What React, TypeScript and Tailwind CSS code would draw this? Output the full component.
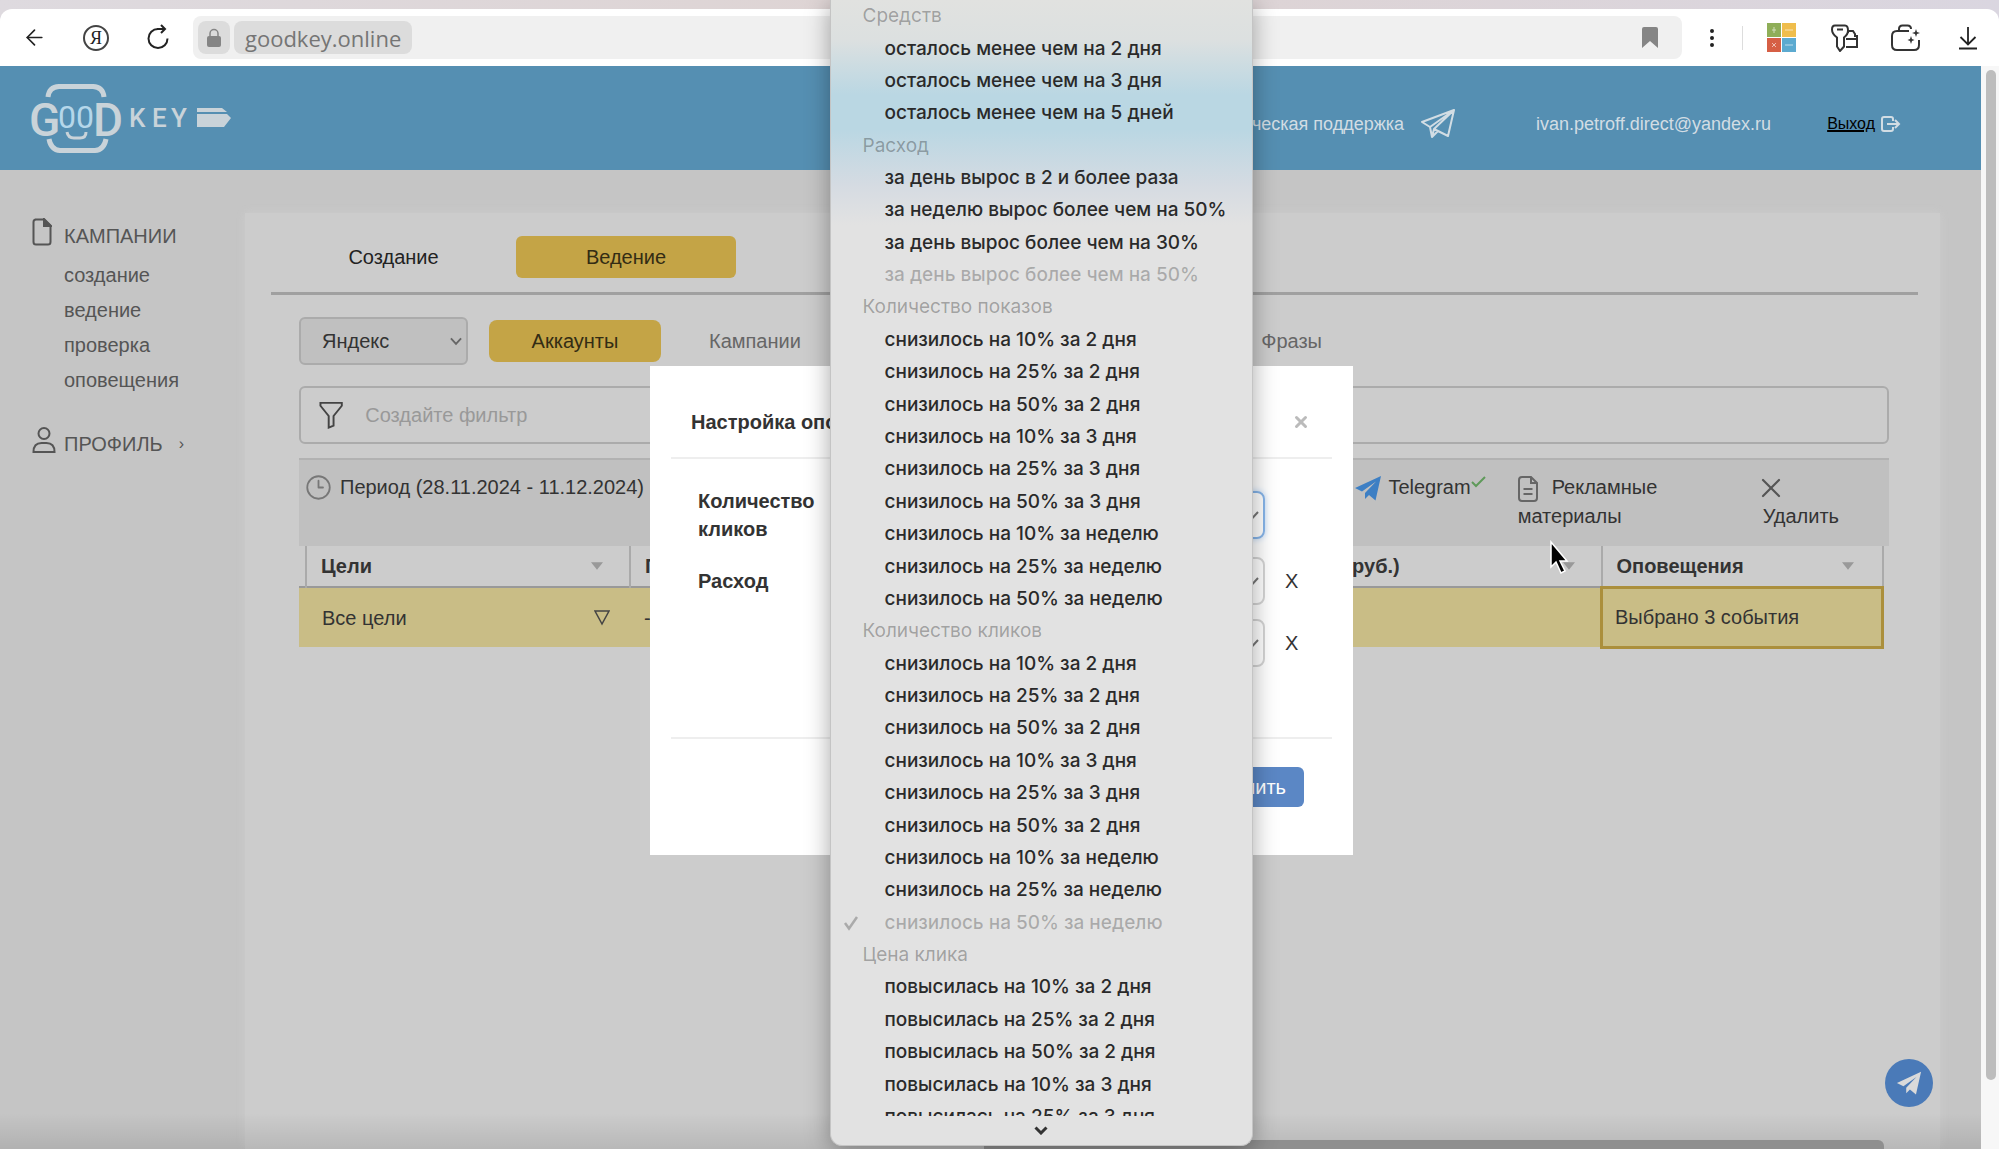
import { Fragment } from "react";
import { ArrowLeft, Clock3, EllipsisVertical, X } from "lucide-react";

const groups = [
  {
    title: "Средств",
    items: ["осталось менее чем на 2 дня", "осталось менее чем на 3 дня", "осталось менее чем на 5 дней"],
  },
  {
    title: "Расход",
    items: [
      "за день вырос в 2 и более раза",
      "за неделю вырос более чем на 50%",
      "за день вырос более чем на 30%",
      "за день вырос более чем на 50%",
    ],
    disabled: 3,
  },
  {
    title: "Количество показов",
    items: [
      "снизилось на 10% за 2 дня",
      "снизилось на 25% за 2 дня",
      "снизилось на 50% за 2 дня",
      "снизилось на 10% за 3 дня",
      "снизилось на 25% за 3 дня",
      "снизилось на 50% за 3 дня",
      "снизилось на 10% за неделю",
      "снизилось на 25% за неделю",
      "снизилось на 50% за неделю",
    ],
  },
  {
    title: "Количество кликов",
    items: [
      "снизилось на 10% за 2 дня",
      "снизилось на 25% за 2 дня",
      "снизилось на 50% за 2 дня",
      "снизилось на 10% за 3 дня",
      "снизилось на 25% за 3 дня",
      "снизилось на 50% за 2 дня",
      "снизилось на 10% за неделю",
      "снизилось на 25% за неделю",
      "снизилось на 50% за неделю",
    ],
    disabled: 8,
    checked: 8,
  },
  {
    title: "Цена клика",
    items: [
      "повысилась на 10% за 2 дня",
      "повысилась на 25% за 2 дня",
      "повысилась на 50% за 2 дня",
      "повысилась на 10% за 3 дня",
      "повысилась на 25% за 3 дня",
    ],
  },
];

const sideLinks = ["создание", "ведение", "проверка", "оповещения"];

function BrowserBar() {
  return (
    <div className="bg-linear-to-r from-[#dedadf] via-[#ded3d2] to-[#dad6e0] pt-[9px]">
      <div className="flex h-[57px] items-center rounded-t-xl bg-white px-[22px] text-[#222]">
        <button aria-label="Назад">
          <ArrowLeft size={25} strokeWidth={1.6} />
        </button>
        <button
          aria-label="Яндекс"
          className="ml-9 flex size-[26px] items-center justify-center rounded-full border-2 border-[#444] font-['Liberation_Serif',serif] text-lg leading-none"
        >
          Я
        </button>
        <button aria-label="Обновить" className="ml-9">
          <svg width="26" height="28" viewBox="0 0 26 28" fill="none" stroke="#222" strokeWidth="2">
            <path d="M13 5a9.500 9.500 0 1 0 9.500 9.500" />
            <path d="M12 5h7M16 1l4 4-4 4" />
          </svg>
        </button>
        <div className="ml-[22px] flex h-[43px] flex-1 items-center rounded-lg bg-[#f0f0f0] pl-[5px] pr-6">
          <span className="flex h-[33px] w-8 items-center justify-center rounded-lg bg-[#dcdcdc]">
            <svg width="16" height="20" viewBox="0 0 16 20">
              <path d="M4 9V5.500a4 4 0 0 1 8 0V9" fill="none" stroke="#858585" strokeWidth="1.500" />
              <rect x="1" y="8" width="14" height="11" rx="2" fill="#858585" />
            </svg>
          </span>
          <span className="ml-1 flex h-[33px] items-center rounded-lg bg-[#dcdcdc] px-[11px] font-['Open_Sans',sans-serif] text-[22px] leading-none text-[#757575]">
            goodkey.online
          </span>
          <svg className="ml-auto" width="16" height="21" viewBox="0 0 16 21">
            <path d="M2 0h12q2 0 2 2v19l-8-7-8 7V2q0-2 2-2z" fill="#858585" />
          </svg>
        </div>
        <button aria-label="Меню" className="ml-[18px]">
          <EllipsisVertical size={24} strokeWidth={2} />
        </button>
        <span className="ml-[18px] h-6 w-px bg-[#ddd]" />
        <svg className="ml-6" width="30" height="30" viewBox="0 0 30 30">
          <rect width="14" height="14" fill="#8fae58" />
          <rect x="15" width="14" height="14" fill="#efbd4c" />
          <rect y="15" width="14" height="14" fill="#d65f45" />
          <rect x="15" y="15" width="14" height="14" fill="#5caad0" />
          <path d="M7 4v6M5 7h4M18 7h8M5 20l4 4M9 20l-4 4M18 22h8" stroke="#fff" opacity=".6" />
        </svg>
        <button aria-label="Пароли" className="ml-[34px]">
          <svg width="28" height="28" viewBox="0 0 28 28" fill="none" stroke="#333" strokeWidth="2">
            <path d="M4 1.500h10q3 0 3 5 0 4-4 7v9l-4 4.500-3-4.500v-9Q1 10 1 5.500 1 1.500 4 1.500z" />
            <path d="M6 5.500h6M17 9V7h5l2 3v2h2v11H15M15 15h11" />
          </svg>
        </button>
        <button aria-label="Покупки" className="ml-8">
          <svg width="30" height="28" viewBox="0 0 30 28" fill="none" stroke="#333" strokeWidth="2">
            <path d="M18 7H6q-5 0-5 5v9q0 5 5 5h17q5 0 5-5v-5" />
            <path d="M8 7V5q0-3.500 3.500-3.500h5Q20 1.500 20 5" />
            <path d="M25 5l1 3 3 1-3 1-1 3-1-3-3-1 3-1zM20 12l1 3 2.500 1-2.500 1-1 3-1-3-2.500-1 2.500-1z" fill="#333" stroke="none" />
          </svg>
        </button>
        <button aria-label="Загрузки" className="ml-[38px]">
          <svg width="18" height="24" viewBox="0 0 18 24" fill="none" stroke="#222" strokeWidth="1.800">
            <path d="M9 1v17M1.500 11L9 18.500 16.500 11M0 22.500h18" />
          </svg>
        </button>
      </div>
    </div>
  );
}

function Logo() {
  return (
    <svg width="202" height="74" viewBox="30 82 202 74" fill="none" stroke="#c9d3d9">
      <path d="M48 98q1-10 11-10.500h34q10 .5 11 10.500M49 140q2 11 11 11.500h35q9-.5 11-11.500" strokeWidth="5" />
      <path d="M67 133q1 6 7 6h6q6 0 6-6" strokeWidth="3" />
      <g fill="#c9d3d9" stroke="none" className="font-['Roboto',sans-serif]">
        <text x="29" y="137" fontSize="46" fontWeight="500">G</text>
        <text x="58" y="129" fontSize="32" fill="#b5d7ea">0</text>
        <text x="76" y="129" fontSize="32" fill="#b5d7ea">0</text>
        <text x="93" y="137" fontSize="46" fontWeight="500">D</text>
        <text x="129 152 171" y="128" fontSize="26" fontWeight="500">KEY</text>
        <path d="M197 109h25l5 4h-30zM197 115h30l4 4-7 9h-27z" />
      </g>
    </svg>
  );
}

function Plane({ size, className }: { size: number; className?: string }) {
  return (
    <svg className={className} width={size} height={size} viewBox="0 0 28 28" fill="currentColor">
      <path d="M27 2L1 14l7 3.500L22 7.500 11 19v6l4-4 6.500 5.500z" />
    </svg>
  );
}

function Header() {
  return (
    <header className="flex h-[104px] items-center bg-[#558fb2] pl-[30px] pr-20 text-lg text-[#d2dde4]">
      <a href="#" aria-label="GoodKey">
        <Logo />
      </a>
      <a href="#" className="mt-3 ml-auto flex items-center gap-4">
        Техническая поддержка
        <svg width="36" height="30" viewBox="0 0 36 30" fill="none" stroke="#d2dde4" strokeWidth="2" strokeLinejoin="round">
          <path d="M34 1L2 13l8 5 2 10 6-6 10 5zM34 1L10 18M34 1L14 20l-2 8M14 20l4 2" />
        </svg>
      </a>
      <span className="mt-3 ml-20">ivan.petroff.direct@yandex.ru</span>
      <a href="#" className="mt-3 ml-14 flex items-center gap-1.5 text-base text-black">
        <span className="underline decoration-2">Выход</span>
        <svg width="20" height="16" viewBox="0 0 20 16" fill="none" stroke="#d2dde4" strokeWidth="2">
          <path d="M12 5V3q0-2-2-2H3Q1 1 1 3v10q0 2 2 2h7q2 0 2-2v-2M6 8h11M14 4l4 4-4 4" />
        </svg>
      </a>
    </header>
  );
}

function Sidebar() {
  return (
    <aside className="w-[245px] shrink-0 pt-[50px] pl-8 text-xl text-[#555]">
      <div className="flex h-8 items-center">
        <svg className="-mt-2 mr-3" width="20" height="28" viewBox="0 0 20 28" fill="none" stroke="#555" strokeWidth="2">
          <path d="M3 1.500h9L18.500 8v16q0 2.500-2.500 2.500H4q-2.500 0-2.500-2.500V4q0-2.500 2.500-2.500z" />
          <path d="M12 1v7h7z" fill="#555" />
        </svg>
        КАМПАНИИ
      </div>
      <nav className="mt-1.5 flex flex-col pl-8 leading-[35px]">
        {sideLinks.map((link) => (
          <a key={link} href="#">
            {link}
          </a>
        ))}
      </nav>
      <div className="mt-[30px] flex h-8 items-center">
        <svg className="-mt-2 mr-2" width="24" height="28" viewBox="0 0 24 28" fill="none" stroke="#555" strokeWidth="2">
          <circle cx="12" cy="7.500" r="5.500" />
          <path d="M1.500 26q0-9 8-9h5q8 0 8 9z" />
        </svg>
        ПРОФИЛЬ
        <span className="ml-4 text-base">›</span>
      </div>
    </aside>
  );
}

function Sort() {
  return (
    <svg width="12" height="8" viewBox="0 0 14 9" fill="#999">
      <path d="M0 0h14L7 9z" />
    </svg>
  );
}

function Workspace() {
  return (
    <main className="mt-[43px] mr-[41px] flex-1 bg-[#ccc] pt-[23px] pr-[22px] pl-[26px] text-xl text-[#333] shadow-[0_0_8px_#ccc]">
      <div className="flex border-b-[3px] border-[#a0a0a0] pb-3.5">
        <button className="h-[42px] w-[245px] text-[#222]">Создание</button>
        <button className="h-[42px] w-[220px] rounded-md bg-[#c4a446] text-[#332c14]">Ведение</button>
      </div>
      <div className="pt-[22px] pr-[29px] pl-7">
        <div className="flex items-center">
          <div className="relative">
            <select
              aria-label="Система"
              className="h-12 w-[169px] appearance-none rounded-md border-2 border-[#ababab] bg-[#c0c0c0] pl-[21px]"
            >
              <option>Яндекс</option>
            </select>
            <svg className="pointer-events-none absolute top-5 right-1.5" width="12" height="9" viewBox="0 0 13 9" fill="none" stroke="#666" strokeWidth="2">
              <path d="M1 1l5.500 6L12 1" />
            </svg>
          </div>
          <button className="ml-[21px] h-[42px] w-[172px] rounded-lg bg-[#c4a446] text-[#332c14]">Аккаунты</button>
          <button className="ml-12 text-[#666]">Кампании</button>
          <button className="ml-auto pr-[567px] text-[#666]">Фразы</button>
        </div>
        <label className="mt-[21px] flex h-[58px] items-center rounded-md border-2 border-[#ababab] pl-[18px]">
          <svg width="25" height="28" viewBox="0 0 25 28" fill="none" stroke="#444" strokeWidth="2">
            <path d="M1.500 1.500h22v3L15 15v10l-5 2V15L1.500 4.500z" />
          </svg>
          <input className="ml-[22px] w-full outline-none placeholder:text-[#999]" placeholder="Создайте фильтр" aria-label="Фильтр" />
        </label>
        <div className="mt-3.5 flex h-[88px] items-start border-t-2 border-[#b2b2b2] bg-[#c0c0c0] pt-[13px] pr-[50px] pl-1.5 leading-[29px]">
          <button className="flex items-center gap-2">
            <Clock3 size={27} strokeWidth={1.6} className="text-[#777]" />
            Период (28.11.2024 - 11.12.2024)
          </button>
          <button className="ml-auto flex items-center">
            <Plane size={28} className="mr-1.5 text-[#3d7fc4]" />
            Telegram
            <svg className="-mt-3" width="15" height="12" viewBox="0 0 15 12" fill="none" stroke="#5f9a5a" strokeWidth="2">
              <path d="M1 6l4 4 9-9" />
            </svg>
          </button>
          <button className="ml-8 w-[150px] text-left">
            <svg className="mr-3.5 inline" width="20" height="26" viewBox="0 0 20 26" fill="none" stroke="#666" strokeWidth="2">
              <path d="M4 1h9l6 6v15q0 3-3 3H4q-3 0-3-3V4q0-3 3-3zM13 1v6h6M5.500 13h9M5.500 18h9" />
            </svg>
            Рекламные материалы
          </button>
          <button className="ml-[95px] text-left">
            <X size={32} strokeWidth={1.6} className="-mt-px -mb-0.5 -ml-2 text-[#555]" />
            Удалить
          </button>
        </div>
        <div className="pr-[5px]">
          <table className="w-full table-fixed text-left">
            <thead>
              <tr className="h-[41px] border-b-2 border-[#999] text-[#333]">
                <th className="w-[7px]" />
                <th className="w-[324px] border-l-2 border-[#aaa] pr-[26px] pl-3.5">
                  <div className="flex items-center justify-between">
                    Цели <Sort />
                  </div>
                </th>
                <th className="border-l-2 border-[#aaa] pl-3.5">Показы</th>
                <th className="w-[352px] pr-[26px] pl-5">
                  <div className="flex items-center justify-between">
                    Расход (руб.) <Sort />
                  </div>
                </th>
                <th className="w-[281px] border-x-2 border-[#aaa] pr-7 pl-3.5">
                  <div className="flex items-center justify-between">
                    Оповещения <Sort />
                  </div>
                </th>
              </tr>
            </thead>
            <tbody>
              <tr className="h-[60px] bg-[#c9bd86]">
                <td />
                <td className="pr-5 pl-4">
                  <div className="flex items-center justify-between">
                    Все цели
                    <svg width="16" height="16" viewBox="0 0 16 16" fill="none" stroke="#444" strokeWidth="1.500">
                      <path d="M1 1h14L8 14z" />
                    </svg>
                  </div>
                </td>
                <td className="pl-3.5">-</td>
                <td />
                <td className="border-3 border-[#ab8f3c] pl-3">Выбрано 3 события</td>
              </tr>
            </tbody>
          </table>
        </div>
      </div>
    </main>
  );
}

function EventSelect({ label, focused }: { label: string; focused?: boolean }) {
  return (
    <div className="relative flex-1">
      <select
        aria-label={label}
        className={
          focused
            ? "h-12 w-full appearance-none rounded-lg border-2 border-[#86b5ea] shadow-[0_0_6px_#b9d6f7]"
            : "h-12 w-full appearance-none rounded-lg border-2 border-[#d5d5d5]"
        }
      />
      <svg className="pointer-events-none absolute top-5 right-1.5" width="13" height="9" viewBox="0 0 13 9" fill="none" stroke="#777" strokeWidth="2">
        <path d="M1 1l5.500 6L12 1" />
      </svg>
    </div>
  );
}

function Modal() {
  return (
    <div className="absolute inset-0 flex items-start justify-center pt-[366px] pl-1">
      <div role="dialog" className="w-[703px] bg-white px-[21px] pb-12 text-xl text-[#333]">
        <div className="flex h-[93px] items-center justify-between border-b-2 border-[#eee] pt-5 pr-[22px] pl-5">
          <h2 className="font-bold">Настройка оповещений</h2>
          <button aria-label="Закрыть" className="text-[#bbb]">
            <X size={18} strokeWidth={4} />
          </button>
        </div>
        <div className="flex h-[280px] flex-col gap-[14px] border-b-2 border-[#eee] pt-8 pr-[35px] pl-[27px]">
          <div className="flex pr-8">
            <div className="-mt-1 w-[150px] leading-7 font-bold">Количество кликов</div>
            <EventSelect label="Количество кликов" focused />
          </div>
          <div className="flex items-center">
            <div className="w-[150px] font-bold">Расход</div>
            <EventSelect label="Расход" />
            <button className="ml-5 w-3">X</button>
          </div>
          <div className="flex items-center pl-[150px]">
            <EventSelect label="Расход 2" />
            <button className="ml-5 w-3">X</button>
          </div>
        </div>
        <div className="flex justify-end pt-7 pr-7">
          <button className="h-10 rounded-md bg-[#5b87c5] px-[18px] text-white">Сохранить</button>
        </div>
      </div>
    </div>
  );
}

function OptionsMenu() {
  return (
    <div className="absolute inset-0 flex items-start justify-center pl-[83px]">
      <div className="w-[423px] overflow-hidden rounded-b-xl border-x border-b border-[#c4c4c4] bg-[#e2e2e2] bg-[linear-gradient(#e1e2e0_0px,#dce0e0_40px,#bad7e3_95px,#bad7e3_130px,#d5dbe2_185px,#e2e2e2_225px)] font-['Inter',sans-serif] text-[19px] leading-8 font-medium shadow-[0_4px_24px_rgba(0,0,0,0.35)]">
        <div className="h-[1116px] overflow-hidden">
          <ul role="listbox" aria-label="Событие" className="flex h-[1133px] flex-col">
            {groups.map((group) => (
              <Fragment key={group.title}>
                <li role="presentation" className="h-8 flex-1 pl-8 font-normal text-black/30">
                  {group.title}
                </li>
                {group.items.map((item, i) => (
                  <li
                    key={i}
                    role="option"
                    aria-selected={i === group.checked}
                    aria-disabled={i === group.disabled}
                    className={
                      i === group.disabled
                        ? "flex h-8 flex-1 items-center pl-3 text-black/25"
                        : "flex h-8 flex-1 items-center pl-3 text-[#2a2a2a]"
                    }
                  >
                    <span className="w-[42px]">
                      {i === group.checked && (
                        <svg width="16" height="16" viewBox="0 0 16 16" fill="none" stroke="#aaa" strokeWidth="2.500">
                          <path d="M2 8l4 5.500L14 2" />
                        </svg>
                      )}
                    </span>
                    {item}
                  </li>
                ))}
              </Fragment>
            ))}
          </ul>
        </div>
        <button aria-label="Ниже" className="flex h-[29px] w-full items-center justify-center">
          <svg width="14" height="9" viewBox="0 0 14 9" fill="none" stroke="#333" strokeWidth="3">
            <path d="M1.500 1.500L7 7l5.500-5.500" />
          </svg>
        </button>
      </div>
    </div>
  );
}

export default function App() {
  return (
    <div className="relative flex h-screen flex-col overflow-hidden bg-[#c5c5c5] font-['Liberation_Sans',sans-serif]">
      <BrowserBar />
      <div className="flex flex-1">
        <div className="relative flex flex-1 flex-col">
          <Header />
          <div className="flex flex-1">
            <Sidebar />
            <Workspace />
          </div>
          <div className="absolute inset-x-0 bottom-0 h-9 bg-linear-to-b from-transparent to-black/10" />
          <div className="absolute right-[97px] bottom-0 h-[9px] w-[900px] rounded-tr-md bg-[#8f8f8f]" />
          <button
            aria-label="Telegram"
            className="absolute right-12 bottom-[42px] flex size-12 items-center justify-center rounded-full bg-[#4a7ab8] text-[#dadada]"
          >
            <Plane size={26} />
          </button>
        </div>
        <div className="w-[18px] bg-[#f7f7f7] pt-1 pl-[5px]">
          <div className="h-[1010px] w-2.5 rounded-full bg-[#bdbdbd]" />
        </div>
      </div>
      <Modal />
      <OptionsMenu />
      <svg className="absolute top-[540px] left-[1549px]" width="20" height="36" viewBox="0 0 20 36">
        <path d="M2 2v25l5-5 5 11 4-2-5-10h7z" fill="#000" stroke="#fff" strokeWidth="1.500" />
      </svg>
    </div>
  );
}
